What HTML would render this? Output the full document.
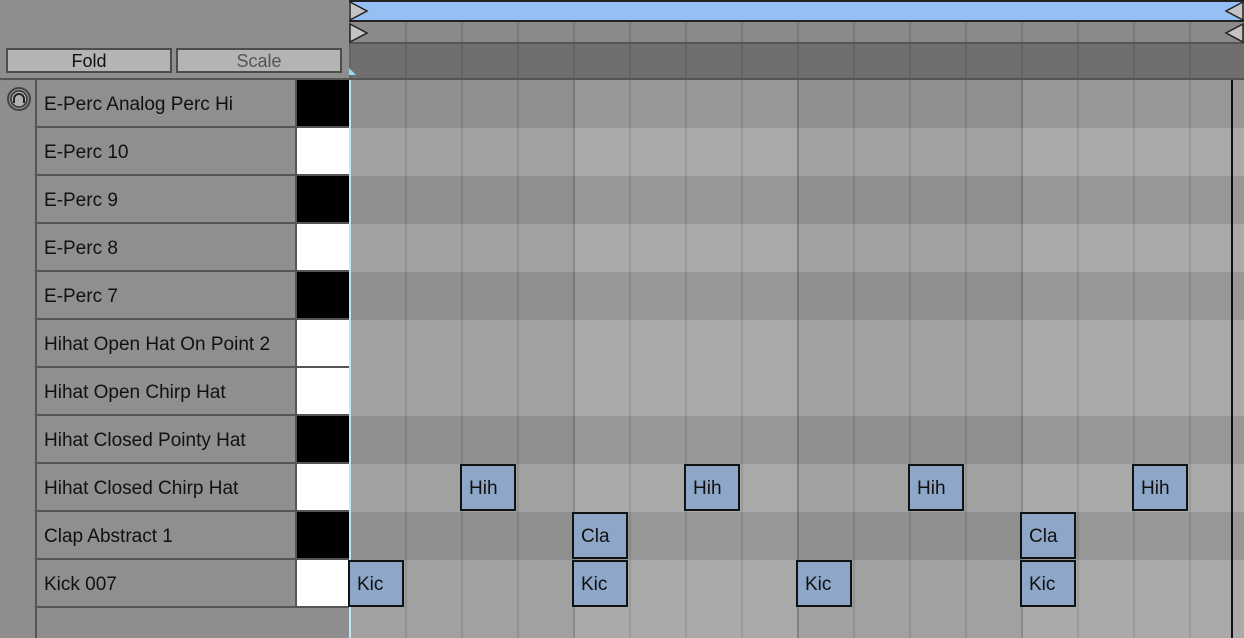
<!DOCTYPE html><html><head><style>
*{margin:0;padding:0;box-sizing:border-box}
body{width:1244px;height:638px;overflow:hidden;background:#8e8e8e;position:relative;font-family:"Liberation Sans",sans-serif}
div{position:absolute}
.btn{top:48px;height:25px;background:#b4b4b4;border:2px solid #4c4c4c;font-size:18px;text-align:center;line-height:23px}
.nm{left:37px;width:260px;height:48px;background:#8f8f8f;border-bottom:2px solid #555;border-right:2px solid #555;font-size:19px;color:#111;padding-left:7px;padding-top:2px;line-height:46px;white-space:nowrap;overflow:hidden}
.k{left:297px;width:52px;height:48px;border-bottom:2px solid #555}
.n{width:56px;height:47px;background:#8ea6c8;border:2px solid #111;font-size:19px;color:#111;padding-left:7px;line-height:45px}
.d{background:repeating-linear-gradient(180deg,#8f8f8f 0 48px,#a1a1a1 48px 96px)}
.l{background:repeating-linear-gradient(180deg,#979797 0 48px,#aaaaaa 48px 96px)}
</style></head><body>
<div style="left:0;top:0;width:349px;height:80px;background:#8e8e8e;border-bottom:2px solid #555"></div>
<div class="btn" style="left:6px;width:166px;color:#111">Fold</div>
<div class="btn" style="left:176px;width:166px;color:#555">Scale</div>
<div style="left:349px;top:0;width:895px;height:22px;background:#96c0f4;border-top:2px solid #222;border-bottom:2px solid #222"></div>
<div style="left:349px;top:22px;width:895px;height:22px;background:#8a8a8a;border-bottom:2px solid #555;background-image:repeating-linear-gradient(90deg,#7a7a7a 0 2px,transparent 2px 56px)"></div>
<div style="left:349px;top:44px;width:895px;height:36px;background:#6f6f6f;border-bottom:2px solid #555;background-image:repeating-linear-gradient(90deg,#646464 0 2px,transparent 2px 56px)"></div>
<svg style="position:absolute;left:349px;top:0" width="20" height="46"><path d="M1 2 L18 11 L1 20Z M1 24 L18 33 L1 42Z" fill="#c4c4c4" stroke="#222" stroke-width="1.5"/></svg>
<svg style="position:absolute;left:1224px;top:0" width="20" height="46"><path d="M19 2 L2 11 L19 20Z M19 24 L2 33 L19 42Z" fill="#c4c4c4" stroke="#222" stroke-width="1.5"/></svg>
<div style="left:349px;top:68px;width:0;height:0;border-left:7px solid #8fe0f0;border-top:7px solid transparent"></div>
<div class="d" style="left:349px;top:80px;width:224px;height:240px"></div>
<div class="l" style="left:573px;top:80px;width:224px;height:240px"></div>
<div class="d" style="left:797px;top:80px;width:224px;height:240px"></div>
<div class="l" style="left:1021px;top:80px;width:223px;height:240px"></div>
<div style="left:349px;top:320px;width:224px;height:96px;background:#a1a1a1"></div>
<div style="left:573px;top:320px;width:224px;height:96px;background:#aaaaaa"></div>
<div style="left:797px;top:320px;width:224px;height:96px;background:#a1a1a1"></div>
<div style="left:1021px;top:320px;width:223px;height:96px;background:#aaaaaa"></div>
<div class="d" style="left:349px;top:416px;width:224px;height:192px"></div>
<div class="l" style="left:573px;top:416px;width:224px;height:192px"></div>
<div class="d" style="left:797px;top:416px;width:224px;height:192px"></div>
<div class="l" style="left:1021px;top:416px;width:223px;height:192px"></div>
<div style="left:349px;top:608px;width:224px;height:30px;background:#a1a1a1"></div>
<div style="left:573px;top:608px;width:224px;height:30px;background:#aaaaaa"></div>
<div style="left:797px;top:608px;width:224px;height:30px;background:#a1a1a1"></div>
<div style="left:1021px;top:608px;width:223px;height:30px;background:#aaaaaa"></div>
<div style="left:349px;top:80px;width:895px;height:558px;background-image:repeating-linear-gradient(90deg,rgba(0,0,0,.1) 0 2px,transparent 2px 56px)"></div>
<div style="left:349px;top:80px;width:895px;height:558px;background-image:repeating-linear-gradient(90deg,rgba(0,0,0,.1) 0 2px,transparent 2px 224px)"></div>
<div style="left:349px;top:80px;width:2px;height:558px;background:#bde8f2"></div>
<div style="left:1231px;top:80px;width:2px;height:558px;background:#111"></div>
<div style="left:0;top:80px;width:37px;height:558px;background:#8e8e8e;border-right:2px solid #555"></div>
<svg style="position:absolute;left:6px;top:86px" width="26" height="26"><circle cx="13" cy="13" r="11" fill="#8e8e8e" stroke="#444" stroke-width="2"/><circle cx="13" cy="13" r="8" fill="#b0b0b0" stroke="#333" stroke-width="1.5"/><path d="M8 17 V13 A5 5 0 0 1 18 13 V17" fill="none" stroke="#222" stroke-width="2"/></svg>
<div class="nm" style="top:80px">E-Perc Analog Perc Hi</div>
<div class="nm" style="top:128px">E-Perc 10</div>
<div class="nm" style="top:176px">E-Perc 9</div>
<div class="nm" style="top:224px">E-Perc 8</div>
<div class="nm" style="top:272px">E-Perc 7</div>
<div class="nm" style="top:320px">Hihat Open Hat On Point 2</div>
<div class="nm" style="top:368px">Hihat Open Chirp Hat</div>
<div class="nm" style="top:416px">Hihat Closed Pointy Hat</div>
<div class="nm" style="top:464px">Hihat Closed Chirp Hat</div>
<div class="nm" style="top:512px">Clap Abstract 1</div>
<div class="nm" style="top:560px">Kick 007</div>
<div class="k" style="top:80px;background:#000"></div>
<div class="k" style="top:128px;background:#fff"></div>
<div class="k" style="top:176px;background:#000"></div>
<div class="k" style="top:224px;background:#fff"></div>
<div class="k" style="top:272px;background:#000"></div>
<div class="k" style="top:320px;background:#fff"></div>
<div class="k" style="top:368px;background:#fff"></div>
<div class="k" style="top:416px;background:#000"></div>
<div class="k" style="top:464px;background:#fff"></div>
<div class="k" style="top:512px;background:#000"></div>
<div class="k" style="top:560px;background:#fff"></div>
<div style="left:37px;top:608px;width:312px;height:30px;background:#8e8e8e"></div>
<div class="n" style="left:460px;top:464px">Hih</div>
<div class="n" style="left:684px;top:464px">Hih</div>
<div class="n" style="left:908px;top:464px">Hih</div>
<div class="n" style="left:1132px;top:464px">Hih</div>
<div class="n" style="left:572px;top:512px">Cla</div>
<div class="n" style="left:1020px;top:512px">Cla</div>
<div class="n" style="left:348px;top:560px">Kic</div>
<div class="n" style="left:572px;top:560px">Kic</div>
<div class="n" style="left:796px;top:560px">Kic</div>
<div class="n" style="left:1020px;top:560px">Kic</div>
</body></html>
